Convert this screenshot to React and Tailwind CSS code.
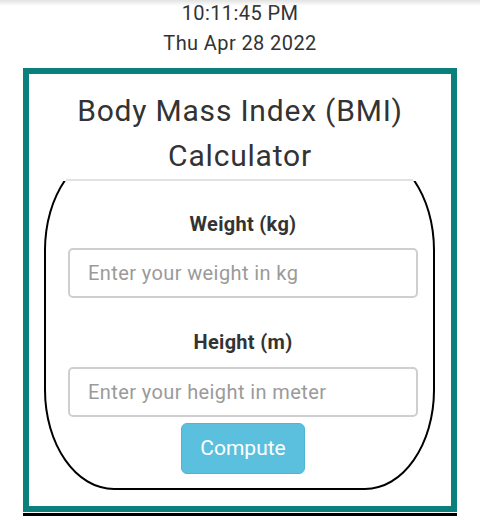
import React from "react";

export default function App() {
  return (
    <div
      className="relative w-[480px] h-[516px] overflow-hidden bg-white text-[#333]"
      style={{ fontFamily: "Roboto, 'Noto Sans', sans-serif" }}
    >
      <div className="pointer-events-none absolute left-0 right-0 top-0 h-[6px] bg-linear-to-b from-[#e2e2e2] to-white/0" />
      <div className="text-center text-[20px] leading-[30px] tracking-[0.4px] -mt-[2px]">
        <div>10:11:45 PM</div>
        <div>Thu Apr 28 2022</div>
      </div>

      <div className="mx-[23px] mt-[10px] h-[444px] border-[6px] border-[#0b7f7b] bg-white flex flex-col">
        <h1 className="pt-[14px] text-center text-[30px] leading-[45px] tracking-[0.8px] font-normal text-[#333]">
          Body Mass Index (BMI)
          <br />
          Calculator
        </h1>
        <div className="mt-[1px] ml-[37px] w-[347px] h-[2px] bg-[#e2e2e2]" />
        <div className="ml-[15px] w-[391px] overflow-hidden pb-[16px]">
          <div className="-mt-[31px] h-[340px] border-2 border-black rounded-[70px/100px] pl-[22px] pt-[59px]">
            <div className="w-[350px] flex flex-col items-center">
              <label className="text-[20px] leading-[27px] tracking-[0.3px] font-bold text-[#333]">
                Weight (kg)
              </label>
              <input
                type="text"
                placeholder="Enter your weight in kg"
                className="mt-[10px] w-[350px] h-[50px] border-2 border-[#cfcfcf] rounded-[5px] pl-[18px] text-[20px] tracking-[0.4px] placeholder:text-[#9a9a9a] outline-none"
              />
              <label className="mt-[31px] text-[20px] leading-[27px] tracking-[0.3px] font-bold text-[#333]">
                Height (m)
              </label>
              <input
                type="text"
                placeholder="Enter your height in meter"
                className="mt-[11px] w-[350px] h-[50px] border-2 border-[#cfcfcf] rounded-[5px] pl-[18px] text-[20px] tracking-[0.4px] placeholder:text-[#9a9a9a] outline-none"
              />
              <button className="mt-[6px] w-[124px] h-[51px] rounded-[6px] bg-[#5bc0de] border border-[#4fb5d4] text-white text-[21px]">
                Compute
              </button>
            </div>
          </div>
        </div>
      </div>
      <div className="mx-[23px] mt-[1px] h-[4px] bg-black" />
    </div>
  );
}
